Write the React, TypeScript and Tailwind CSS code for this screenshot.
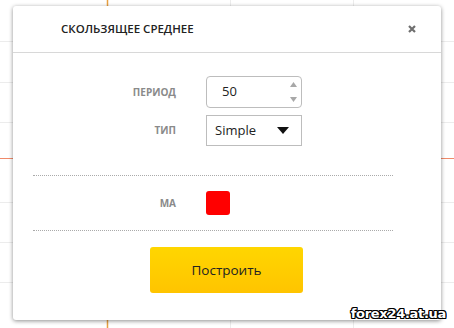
const font = { fontFamily: '"Open Sans", "Liberation Sans", sans-serif' };

function ChartBackdrop() {
  return (
    <svg className="absolute inset-0" width={454} height={328}>
      {[41, 82, 122, 202, 242, 282].map((y) => (
        <line key={y} x1={0} x2={454} y1={y + 0.5} y2={y + 0.5} stroke="#ececec" />
      ))}
      {[230, 353].map((x) => (
        <line key={x} x1={x + 0.5} x2={x + 0.5} y1={0} y2={328} stroke="#ececec" />
      ))}
      <line x1={0} x2={454} y1={158.5} y2={158.5} stroke="#f08a6a" />
      <line x1={107.5} x2={107.5} y1={0} y2={328} stroke="#e8a040" strokeWidth={1.5} />
    </svg>
  );
}

export default function App() {
  return (
    <div className="relative h-[328px] w-[454px] overflow-hidden bg-white" style={font}>
      <ChartBackdrop />

      <div className="absolute left-[13px] top-[6px] flex h-[314px] w-[428px] flex-col rounded-[3px] bg-white shadow-[0_1px_4px_rgba(0,0,0,0.45)]">
        <div className="flex h-[47px] items-center justify-between border-b border-[#d8d8d8] pl-[48px] pr-[25px]">
          <span className="text-[11.5px] font-semibold text-[#222]">СКОЛЬЗЯЩЕЕ СРЕДНЕЕ</span>
          <svg width={8} height={8} viewBox="0 0 8 8">
            <path d="M1 1l6 6M7 1L1 7" stroke="#6f6f6f" strokeWidth={2.2} />
          </svg>
        </div>

        <div className="flex flex-col gap-[7px] pt-[23px]">
          <div className="flex items-center">
            <span className="w-[163px] text-right text-[10px] font-bold text-[#8a8a8a]">ПЕРИОД</span>
            <div className="ml-[30px] flex h-[32px] w-[96px] items-center justify-between rounded-[4px] border border-[#bdbdbd] pl-[15px] pr-[4px]">
              <span className="text-[13px] text-[#222]">50</span>
              <div className="flex h-full flex-col justify-between py-[5px]">
                <svg width={7} height={5} viewBox="0 0 7 5">
                  <path d="M3.5 0L7 5H0z" fill="#a8a8a8" />
                </svg>
                <svg width={7} height={5} viewBox="0 0 7 5">
                  <path d="M0 0h7L3.5 5z" fill="#a8a8a8" />
                </svg>
              </div>
            </div>
          </div>
          <div className="flex items-center">
            <span className="w-[163px] text-right text-[10px] font-bold text-[#8a8a8a]">ТИП</span>
            <div className="ml-[30px] flex h-[31px] w-[96px] items-center justify-between border border-[#bdbdbd] pl-[8px] pr-[12px]">
              <span className="text-[13px] text-[#222]">Simple</span>
              <svg width={12} height={7} viewBox="0 0 12 7">
                <path d="M0 0h12L6 7z" fill="#111" />
              </svg>
            </div>
          </div>
        </div>

        <div className="ml-[20px] mr-[48px] mt-[29px] border-t border-dotted border-[#aaa]" />

        <div className="flex items-center py-[15px]">
          <span className="w-[163px] text-right text-[10px] font-bold text-[#8a8a8a]">MA</span>
          <div className="ml-[30px] h-[24px] w-[24px] rounded-[3px] bg-[#ff0000]" />
        </div>

        <div className="ml-[20px] mr-[48px] border-t border-dotted border-[#aaa]" />

        <div className="flex pt-[16px]">
          <button className="ml-[137px] h-[46px] w-[153px] rounded-[3px] bg-gradient-to-b from-[#ffd600] to-[#ffc400] text-[13.5px] text-[#222]">
            Построить
          </button>
        </div>
      </div>

      <span
        className="absolute right-[8px] bottom-[5px] text-[13px] font-bold tracking-[-0.3px] text-white"
        style={{
          fontFamily: '"DejaVu Sans", sans-serif',
          textShadow:
            "1px 0 #000, -1px 0 #000, 0 1px #000, 0 -1px #000, 1px 1px #000, -1px -1px #000, 1px -1px #000, -1px 1px #000",
        }}
      >
        forex24.at.ua
      </span>
    </div>
  );
}
